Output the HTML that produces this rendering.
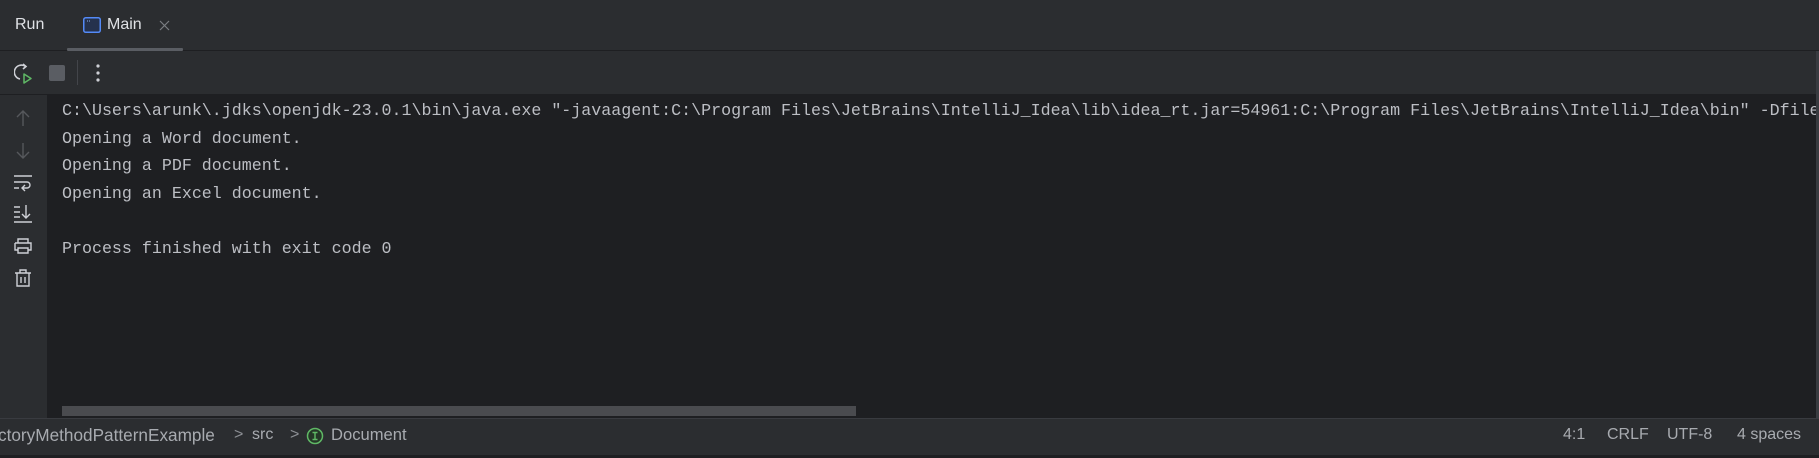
<!DOCTYPE html>
<html><head><meta charset="utf-8"><style>
*{margin:0;padding:0;box-sizing:border-box}
body{width:1819px;height:458px;background:#1e1f22;position:relative;overflow:hidden;font-family:"Liberation Sans",sans-serif}
.abs{position:absolute}
.top{left:0;top:0;width:1819px;height:94px;background:#2b2d30}
.sep1{left:0;top:50px;width:1819px;height:1px;background:#1e1f22}
.sep2{left:0;top:94px;width:1819px;height:1px;background:#1e1f22}
.gut{left:0;top:95px;width:47px;height:323px;background:#2b2d30}
.conwrap{left:62px;top:97px;width:1754px;height:300px;overflow:hidden}
.con{font-family:"Liberation Mono",monospace;font-size:16.65px;line-height:27.5px;color:#bcbec4;white-space:pre}
.status{left:0;top:418px;width:1819px;height:37px;background:#2b2d30;border-top:1px solid #393b40}
.bot{left:0;top:455px;width:1819px;height:3px;background:#1e1f22}
.st{top:426px;font-size:16px;color:#a8abb0;white-space:nowrap}
</style></head><body>
<div class="abs top"></div>
<div class="abs sep1"></div>
<div class="abs sep2"></div>
<div class="abs" style="left:15px;top:16px;font-size:16px;color:#dfe1e5">Run</div>
<svg class="abs" style="left:83px;top:17px" width="18" height="16"><rect x="0.75" y="0.75" width="16.5" height="14.5" rx="2" fill="#25324d" stroke="#548af7" stroke-width="1.5"/><path d="M4 4h1M6 4h1" stroke="#8fb0f0"/></svg>
<div class="abs" style="left:107px;top:16px;font-size:16px;color:#dfe1e5">Main</div>
<svg class="abs" style="left:159px;top:20px" width="11" height="11"><path d="M1 1L10 10M10 1L1 10" stroke="#7a7d82" stroke-width="1.2"/></svg>
<div class="abs" style="left:67px;top:48px;width:116px;height:3px;background:#5a5d63;border-radius:1px"></div>
<svg class="abs" style="left:14px;top:63px" width="22" height="22"><path d="M11.5 3.5A7 7 0 1 0 6 16" fill="none" stroke="#ced0d6" stroke-width="1.6"/><path d="M9 1l3 2.5-3 2.5" fill="none" stroke="#ced0d6" stroke-width="1.6"/><path d="M10 11v9l7-4.5z" fill="none" stroke="#5fb865" stroke-width="1.5" stroke-linejoin="round"/></svg>
<div class="abs" style="left:49px;top:65px;width:16px;height:16px;background:#5a5d63;border-radius:2px"></div>
<div class="abs" style="left:77px;top:60px;width:1px;height:25px;background:#43454a"></div>
<svg class="abs" style="left:95px;top:63px" width="6" height="20"><circle cx="3" cy="3" r="1.6" fill="#ced0d6"/><circle cx="3" cy="10" r="1.6" fill="#ced0d6"/><circle cx="3" cy="17" r="1.6" fill="#ced0d6"/></svg>
<div class="abs gut"></div>
<svg class="abs" style="left:12px;top:108px" width="22" height="200" fill="none" stroke-width="1.4">
<path d="M11 3v15M5 9l6-6 6 6" stroke="#56585c"/>
<path d="M11 35v15M5 44l6 6 6-6" stroke="#56585c"/>
<path d="M2 68h18M2 74h13a3 3 0 0 1 0 6h-4M13 77l-3 3 3 3M2 80h5" stroke="#ced0d6"/>
<path d="M2 99h6M2 104h6M2 109h6M2 114h18M14 97v13M10 106l4 4 4-4" stroke="#ced0d6"/>
<path d="M6 135v-4h10v4M3 135h16v7h-3M3 135v7h3M6 140h10v5H6z" stroke="#ced0d6"/>
<path d="M3 165h16M8 165v-3h6v3M5 165v13h12v-13M9 169v6M13 169v6" stroke="#ced0d6"/>
</svg>
<div class="abs conwrap"><div class="con">C:\Users\arunk\.jdks\openjdk-23.0.1\bin\java.exe "-javaagent:C:\Program Files\JetBrains\IntelliJ_Idea\lib\idea_rt.jar=54961:C:\Program Files\JetBrains\IntelliJ_Idea\bin" -Dfile.encoding=UTF-8
Opening a Word document.
Opening a PDF document.
Opening an Excel document.

Process finished with exit code 0</div></div>
<div class="abs" style="left:62px;top:406px;width:794px;height:10px;background:#4a4b4f"></div>
<div class="abs" style="left:1816px;top:51px;width:3px;height:367px;background:#393b40"></div>
<div class="abs status"></div>
<div class="abs bot"></div>
<div class="abs st" style="left:-2px;font-size:17.2px;top:425px">ctoryMethodPatternExample</div>
<div class="abs st" style="left:234px;color:#8c8f94">&gt;</div>
<div class="abs st" style="left:252px">src</div>
<div class="abs st" style="left:290px;color:#8c8f94">&gt;</div>
<svg class="abs" style="left:306px;top:427px" width="18" height="18"><circle cx="9" cy="9" r="7.5" fill="#253627" stroke="#5fb865" stroke-width="1.5"/><path d="M6.5 5.5h5M6.5 12.5h5M9 5.5v7" stroke="#5fb865" stroke-width="1.4"/></svg>
<div class="abs st" style="left:331px;font-size:16.6px;top:425px">Document</div>
<div class="abs st" style="left:1563px">4:1</div>
<div class="abs st" style="left:1607px">CRLF</div>
<div class="abs st" style="left:1667px">UTF-8</div>
<div class="abs st" style="left:1737px">4 spaces</div>
</body></html>
